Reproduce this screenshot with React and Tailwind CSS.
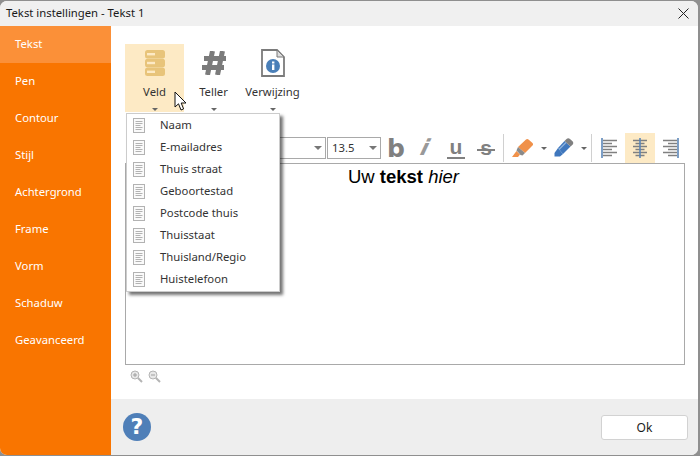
const menuItems = [
  "Naam",
  "E-mailadres",
  "Thuis straat",
  "Geboortestad",
  "Postcode thuis",
  "Thuisstaat",
  "Thuisland/Regio",
  "Huistelefoon",
];

const sideItems = ["Pen", "Contour", "Stijl", "Achtergrond", "Frame", "Vorm", "Schaduw", "Geavanceerd"];

function Caret({ className = "" }) {
  return <span className={"block w-0 h-0 border-x-[3px] border-x-transparent border-t-[3px] border-t-[#666] " + className} />;
}

function SelectCaret() {
  return <span className="block w-0 h-0 border-x-[4px] border-x-transparent border-t-[4px] border-t-[#777]" />;
}

function RibbonButton({ label, active, children }) {
  return (
    <div className={"w-[59px] h-[68px] flex flex-col items-center " + (active ? "bg-[#fdeac5]" : "")}>
      <div className="h-[32px] mt-[3px] flex items-center justify-center">{children}</div>
      <span className="mt-[4px] text-[11.3px] leading-[18px] text-[#333] whitespace-nowrap">{label}</span>
      <Caret className="mt-[7px]" />
    </div>
  );
}

function DocIcon() {
  return (
    <svg width="12" height="15" viewBox="0 0 12 15" fill="none" stroke="#b2b2b2" strokeWidth="1">
      <rect x="0.5" y="0.5" width="11" height="14" fill="#fafafa" />
      <path d="M2.5 3.5h7M2.5 5.5h7M2.5 7.5h5M2.5 9.5h7M2.5 11.5h6" />
    </svg>
  );
}

function AlignIcon({ mode }) {
  const rows = [
    [2.5, 14],
    [5.5, 9],
    [8.5, 14],
    [11.5, 9],
    [14.5, 14],
    [17.5, 9],
  ];
  return (
    <svg width="18" height="20" viewBox="0 0 18 20" fill="none">
      {rows.map(([y, w]) => {
        let x = 2;
        if (mode === "center") x = 9 - w / 2;
        if (mode === "right") x = 16 - w;
        return <path key={y} d={`M${x} ${y}h${w}`} stroke="#808080" strokeWidth="1.5" />;
      })}
      {mode === "left" && <path d="M1 0v20" stroke="#5b86b8" strokeWidth="1.6" />}
      {mode === "center" && <path d="M9 0v20" stroke="#5b86b8" strokeWidth="1.6" />}
      {mode === "right" && <path d="M17 0v20" stroke="#5b86b8" strokeWidth="1.6" />}
    </svg>
  );
}

function ZoomIcon({ plus }) {
  return (
    <svg width="13" height="13" viewBox="0 0 13 13" fill="none">
      <circle cx="5" cy="5" r="4" fill="#e8e8e8" stroke="#b4b4b4" />
      <path d="M3 5h4" stroke="#a0a0a0" />
      {plus && <path d="M5 3v4" stroke="#a0a0a0" />}
      <path d="M8 8l4 4" stroke="#b4b4b4" strokeWidth="2" />
    </svg>
  );
}

function HighlighterIcon() {
  return (
    <svg width="22" height="20" viewBox="0 0 22 20">
      <path d="M6 9L14 1.5c.8-.7 1.8-.7 2.5 0l4 3.5c.8.8.8 1.8 0 2.6L13 15z" fill="#f0914a" />
      <path d="M6 9l7 6-2.5 2.5-2-.5-4-4.5z" fill="#8a8a8a" />
      <path d="M4.5 13L8 16.5 6 19H0z" fill="#f0914a" />
    </svg>
  );
}

function PenIcon() {
  return (
    <svg width="20" height="20" viewBox="0 0 20 20">
      <path d="M4 10L10.5 3l6 5.5L9 16z" fill="#3f77bd" />
      <path d="M10.5 3l2-2c1-1 2.5-1 3.5 0l2.5 2.2c1 1 1 2.5 0 3.5l-2 1.8z" fill="#808080" />
      <path d="M4 10l5 6-3 2.5H0.5V15z" fill="#3f77bd" />
      <path d="M5 11.5l7-7" stroke="#8fb4de" strokeWidth="1.2" />
    </svg>
  );
}

export default function App() {
  return (
    <div className="w-[700px] h-[456px] bg-[#8f8f8f] overflow-hidden" style={{ fontFamily: '"Noto Sans", sans-serif' }}>
      <div className="relative mt-px w-[698px] h-[454px] rounded-[7px] overflow-hidden flex flex-col bg-white">
        {/* Title bar */}
        <div className="h-[25px] shrink-0 bg-[#f0f0f0] flex items-center justify-between pl-[6px] pr-[9px]">
          <span className="text-[11.3px] text-[#1a1a1a]">Tekst instellingen - Tekst 1</span>
          <svg width="11" height="11" viewBox="0 0 11 11" stroke="#222" strokeWidth="1" fill="none">
            <path d="M0.5 0.5l10 10M10.5 0.5l-10 10" />
          </svg>
        </div>

        <div className="flex-1 flex min-h-0">
          {/* Sidebar */}
          <div className="w-[111px] shrink-0 bg-[#f97500] text-white text-[11.3px]">
            <div className="h-[37px] pl-[15px] pb-px flex items-center bg-[#fb9038]">Tekst</div>
            {sideItems.map((item) => (
              <div key={item} className="h-[37px] pl-[15px] pb-px flex items-center">
                {item}
              </div>
            ))}
          </div>

          <div className="flex-1 flex flex-col min-w-0">
            <div className="relative flex-1 pl-[14px] pt-[18px]">
              {/* Ribbon */}
              <div className="flex">
                <RibbonButton label="Veld" active>
                  <svg width="20" height="26" viewBox="0 0 20 26" fill="#e8c47a">
                    <rect x="0" y="0" width="20" height="8.5" rx="2.5" />
                    <rect x="0" y="8.7" width="20" height="8.5" rx="2.5" />
                    <rect x="0" y="17.5" width="20" height="8.5" rx="2.5" />
                    <rect x="2" y="3" width="8" height="2.4" fill="#fdeac5" />
                    <rect x="2" y="11.8" width="8" height="2.4" fill="#fdeac5" />
                    <rect x="2" y="20.6" width="8" height="2.4" fill="#fdeac5" />
                  </svg>
                </RibbonButton>
                <RibbonButton label="Teller">
                  <svg width="24" height="24" viewBox="0 0 24 24" fill="none" stroke="#7b7b7b" strokeWidth="5">
                    <path d="M10.5 0L5.5 24M20.5 0L15.5 24M2 7.5h22M0 16.5h22" />
                  </svg>
                </RibbonButton>
                <RibbonButton label="Verwijzing">
                  <svg width="24" height="28" viewBox="0 0 24 28" fill="none">
                    <path d="M1 1h15l7 7v19H1z" fill="#fff" stroke="#7b7b7b" strokeWidth="1.8" />
                    <path d="M16 1v7h7z" fill="#ddd" stroke="#7b7b7b" />
                    <circle cx="12" cy="17" r="7" fill="#4a7fb8" />
                    <rect x="11" y="15.5" width="2.4" height="5.5" fill="#fff" />
                    <rect x="11" y="12.5" width="2.4" height="2" fill="#fff" />
                  </svg>
                </RibbonButton>
              </div>

              {/* Format toolbar */}
              <div className="mt-[21px] h-[30px] w-[560px] flex items-center">
                <div className="ml-[8px] w-[193px] h-[22px] border border-[#a9a9a9] flex items-center justify-end pr-[3px]">
                  <SelectCaret />
                </div>
                <div className="ml-px w-[54px] h-[22px] border border-[#a9a9a9] flex items-center justify-between pl-[4px] pr-[3px] text-[11.3px] text-[#333]">
                  13.5
                  <SelectCaret />
                </div>
                <div className="ml-[6px] w-[18px] text-center text-[25px] leading-none font-bold text-[#808080]" style={{ fontFamily: '"DejaVu Sans", sans-serif' }}>
                  b
                </div>
                <div className="ml-[12px] w-[16px] text-center text-[22px] leading-none font-bold skew-x-[-25deg] text-[#999]" style={{ fontFamily: '"DejaVu Sans", sans-serif' }}>
                  i
                </div>
                <div className="ml-[14px] w-[18px] text-center text-[21px] leading-[20px] font-bold text-[#808080] border-b-2 border-[#808080] h-[22px]" style={{ fontFamily: '"Liberation Sans", sans-serif' }}>
                  u
                </div>
                <div className="relative ml-[12px] w-[18px] text-center text-[21px] leading-[22px] font-bold text-[#808080]" style={{ fontFamily: '"Liberation Sans", sans-serif' }}>
                  s
                  <span className="absolute left-0 right-0 top-[12px] h-[2px] bg-[#808080]" />
                </div>
                <div className="ml-[8px] w-px h-[28px] bg-[#d0d0d0]" />
                <div className="ml-[8px]">
                  <HighlighterIcon />
                </div>
                <Caret className="ml-[7px]" />
                <div className="ml-[7px]">
                  <PenIcon />
                </div>
                <Caret className="ml-[7px]" />
                <div className="ml-[4px] w-px h-[28px] bg-[#d0d0d0]" />
                <div className="ml-[9px]">
                  <AlignIcon mode="left" />
                </div>
                <div className="ml-[6px] w-[30px] h-[30px] bg-[#fdeac5] flex items-center justify-center">
                  <AlignIcon mode="center" />
                </div>
                <div className="ml-[6px]">
                  <AlignIcon mode="right" />
                </div>
              </div>

              {/* Editor */}
              <div className="w-[560px] h-[202px] border border-[#a9a9a9] pr-[3px] text-center text-[18.5px] leading-[26px] text-black" style={{ fontFamily: '"Liberation Sans", sans-serif' }}>
                Uw <b>tekst</b> <i>hier</i>
              </div>
              <div className="mt-[5px] ml-[5px] flex gap-[5px]">
                <ZoomIcon plus />
                <ZoomIcon />
              </div>

              {/* Veld dropdown */}
              <div className="absolute left-[15px] top-[87px] w-[154px] h-[179px] bg-white border border-[#ccc] shadow-[3px_3px_3px_rgba(0,0,0,0.55)]">
                {menuItems.map((item) => (
                  <div key={item} className="h-[22px] flex items-center pl-[6px] text-[11.3px] text-[#333]">
                    <DocIcon />
                    <span className="ml-[15px]">{item}</span>
                  </div>
                ))}
              </div>

              {/* Mouse cursor */}
              <svg className="absolute left-[63px] top-[65px]" width="14" height="20" viewBox="0 0 14 20">
                <path d="M1 1v15l3.5-3.2L7 19l2.6-1.1L7.2 12H12z" fill="#fff" stroke="#111" strokeWidth="1" />
              </svg>
            </div>

            {/* Footer */}
            <div className="h-[56px] shrink-0 bg-[#eeeeee] flex items-center justify-between pl-[12px] pr-[10px]">
              <div className="w-[28px] h-[28px] rounded-full bg-[#4f7fb8] flex items-center justify-center text-white text-[22px] font-bold leading-none" style={{ fontFamily: '"DejaVu Sans", sans-serif' }}>
                ?
              </div>
              <button className="w-[87px] h-[25px] pt-px rounded-[3px] bg-white border border-[#d2d2d2] text-[12px] text-[#1a1a1a]">Ok</button>
            </div>
          </div>
        </div>
      </div>
    </div>
  );
}
